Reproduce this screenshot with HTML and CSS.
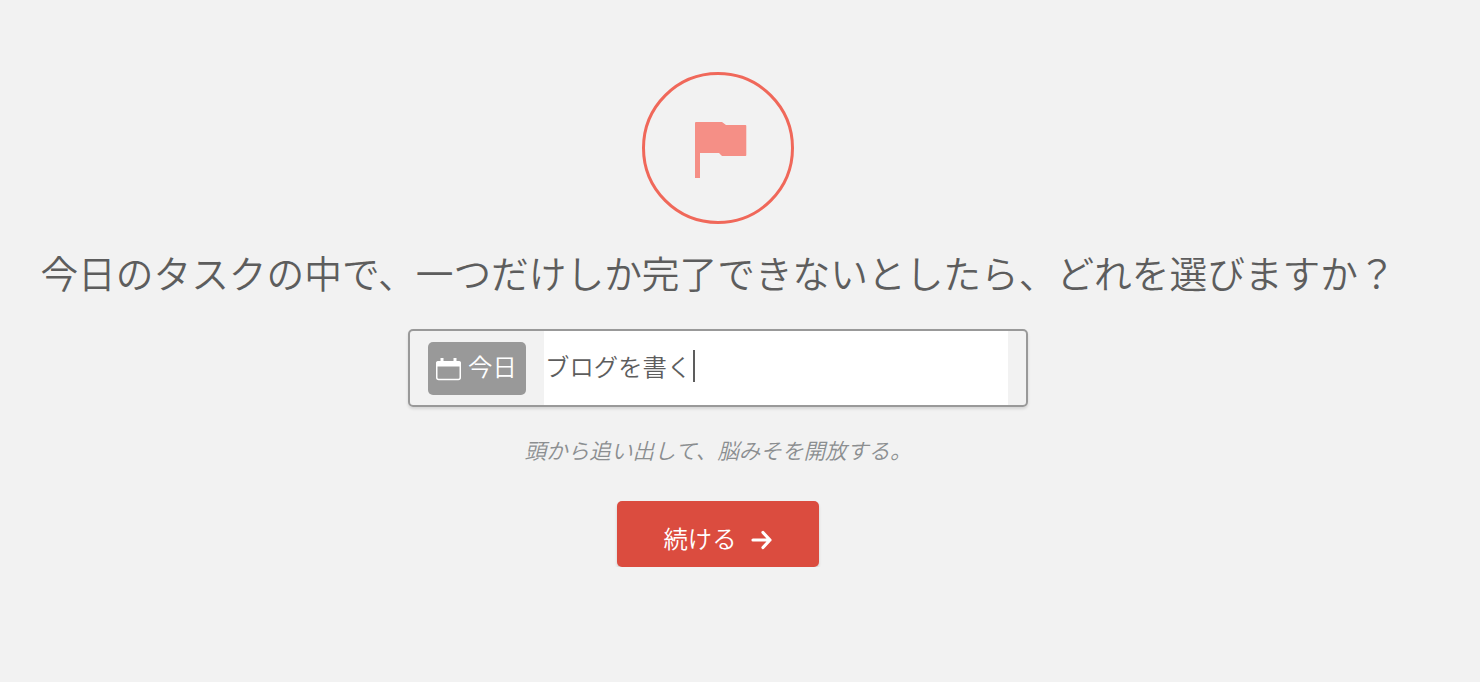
FILE: index.html
```html
<!DOCTYPE html>
<html lang="ja">
<head>
    <meta charset="UTF-8">
    <meta name="viewport" content="width=device-width, initial-scale=1.0">
    <title>今日のタスク</title>
    <link rel="stylesheet" href="styles.css">
</head>
<body>
    <div class="container">
        <div class="circle">
            <svg class="flag" viewBox="0 0 52 57" width="52" height="57">
                <path d="M1 0H27L31 3H50.5Q51.3 3 51.3 4V33Q51.3 34 50.5 34H27L24 31H5V55.5Q5 56 4.5 56H0.5Q0 56 0 55.5V1Q0 0 1 0Z"/>
            </svg>
        </div>

        <h1>今日のタスクの中で、一つだけしか完了できないとしたら、どれを選びますか？</h1>

        <div class="task-box">
            <button class="today">
                <svg viewBox="0 0 26 24" width="26" height="24">
                    <rect x="0.75" y="4" width="23.5" height="17.5" rx="2"/>
                    <path class="solid" d="M0 8.5V5Q0 3 2 3H4.5V0H7.5V3H17.5V0H20.5V3H23Q25 3 25 5V8.5Z"/>
                </svg>
                <span>今日</span>
            </button>
            <div class="task-input"><span>ブログを書く</span><i class="caret"></i></div>
        </div>

        <p class="hint">頭から追い出して、脳みそを開放する。</p>

        <button class="continue">
            <span>続ける</span>
            <svg viewBox="0 0 22 20" width="22" height="20">
                <path d="M2 10H19M12 2.5L19 10L12 17.5"/>
            </svg>
        </button>
    </div>
</body>
</html>
```
FILE: styles.css
```css
* {
    box-sizing: border-box;
}

body {
    margin: 0;
    background-color: #f2f2f2;
    color: #5d5d5d;
    font-family: 'Noto Sans CJK JP', sans-serif;
    font-weight: 350;
}

.container {
    width: 1436px;
    padding-top: 72px;
    display: flex;
    flex-direction: column;
    align-items: center;
}

.circle {
    width: 152px;
    height: 152px;
    border: 3px solid #f0685a;
    border-radius: 50%;
    display: flex;
    align-items: center;
    justify-content: center;
    padding: 4px 0 0 5px;
}

.flag {
    fill: #f58f86;
}

h1 {
    margin: 18px 0 0;
    font-size: 37.7px;
    font-weight: 350;
    line-height: 60px;
    white-space: nowrap;
}

.task-box {
    width: 620px;
    height: 78px;
    margin-top: 27px;
    padding: 0 18px;
    border: 2px solid #999;
    border-radius: 5px;
    box-shadow: 0 2px 3px rgba(0, 0, 0, 0.12);
    display: flex;
    align-items: center;
}

button {
    border: 0;
    font-family: inherit;
    font-weight: 350;
    font-size: 24.4px;
    color: white;
    display: flex;
    align-items: center;
}

.today {
    width: 98px;
    height: 53px;
    margin-right: 18px;
    padding: 0 0 6px 8px;
    border-radius: 5px;
    background-color: #999;
    flex-shrink: 0;
}

.today svg {
    margin: 9px 6px 0 0;
    fill: none;
    stroke: white;
    stroke-width: 1.5;
}

.today .solid {
    fill: white;
    stroke: none;
}

.task-input {
    height: 100%;
    flex: 1;
    padding: 0 0 6px 1px;
    background-color: white;
    font-size: 24.4px;
    display: flex;
    align-items: center;
}

.caret {
    width: 2px;
    height: 32px;
    margin: 2px 0 0 2px;
    background-color: #5d5d5d;
}

.hint {
    margin: 27px 0 0;
    color: #8b8e90;
    font-size: 21.6px;
    font-style: italic;
    line-height: 32px;
}

.continue {
    width: 202px;
    height: 66px;
    margin-top: 35px;
    padding: 6px 0 0;
    border-radius: 5px;
    background-color: #db4c3f;
    box-shadow: 0 2px 3px rgba(0, 0, 0, 0.15);
    justify-content: center;
}

.continue svg {
    margin: 6px 0 0 14px;
    fill: none;
    stroke: white;
    stroke-width: 3.2;
    stroke-linecap: round;
    stroke-linejoin: round;
}
```
